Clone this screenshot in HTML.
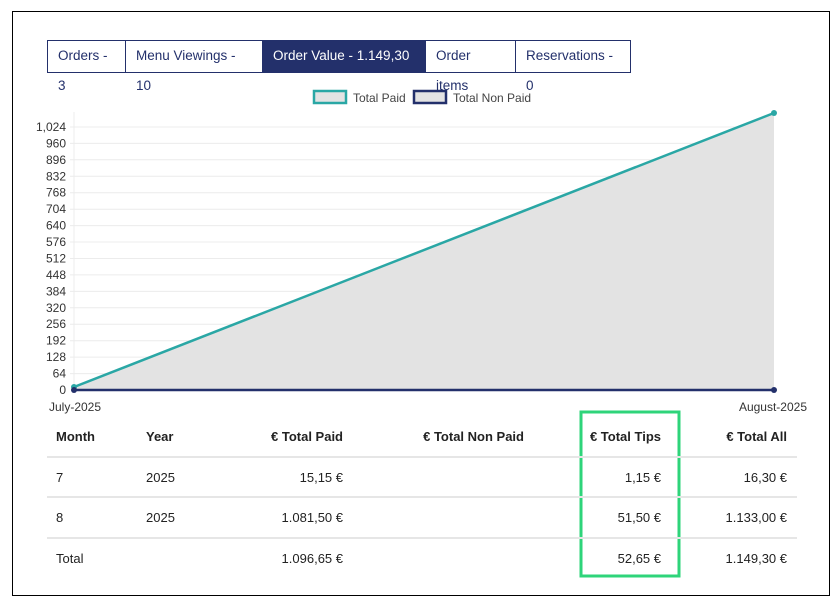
<!DOCTYPE html>
<html><head><meta charset="utf-8"><style>
body{margin:0;width:838px;height:603px;background:#fff;font-family:"Liberation Sans",sans-serif;position:relative;overflow:hidden}
.frame{position:absolute;left:12px;top:11px;width:816px;height:583px;border:1px solid #000}
.tabs{position:absolute;left:47px;top:40px;height:31px;display:flex;border:1px solid #23306b}
.tabs div{height:31px;line-height:30px;font-size:13.5px;color:#23306b;padding:0 10px;border-left:1px solid #23306b;box-sizing:border-box}
.tabs div:first-child{border-left:none}
.tabs .a{background:#23306b;color:#fff}
.t{position:absolute;font-size:13px;color:#222;white-space:nowrap}
.h{font-weight:bold}
.r{text-align:right}
.hl{position:absolute;left:47px;width:750px;height:2px;background:#e6e6e6}
</style></head><body>
<div class="frame"></div>
<div class="tabs"><div style="width:77px">Orders - 3</div><div style="width:137px">Menu Viewings - 10</div><div class="a" style="width:163px">Order Value - 1.149,30 €</div><div style="width:90px">Order items</div><div style="width:115px">Reservations - 0</div></div>
<svg width="838" height="603" style="position:absolute;left:0;top:0" font-family="Liberation Sans, sans-serif">
<rect x="314" y="91" width="32" height="12" fill="#e3e3e3" stroke="#2aa7a5" stroke-width="2.5"/>
<text x="353" y="102" font-size="12" fill="#444">Total Paid</text>
<rect x="414" y="91" width="32" height="12" fill="#e3e3e3" stroke="#23306b" stroke-width="2.5"/>
<text x="453" y="102" font-size="12" fill="#444">Total Non Paid</text>
<g stroke="#ececec" stroke-width="1">
<line x1="70" x2="774" y1="127" y2="127"/><line x1="70" x2="774" y1="143.4" y2="143.4"/><line x1="70" x2="774" y1="159.8" y2="159.8"/><line x1="70" x2="774" y1="176.3" y2="176.3"/><line x1="70" x2="774" y1="192.7" y2="192.7"/><line x1="70" x2="774" y1="209.2" y2="209.2"/><line x1="70" x2="774" y1="225.6" y2="225.6"/><line x1="70" x2="774" y1="242" y2="242"/><line x1="70" x2="774" y1="258.5" y2="258.5"/><line x1="70" x2="774" y1="274.9" y2="274.9"/><line x1="70" x2="774" y1="291.4" y2="291.4"/><line x1="70" x2="774" y1="307.8" y2="307.8"/><line x1="70" x2="774" y1="324.2" y2="324.2"/><line x1="70" x2="774" y1="340.7" y2="340.7"/><line x1="70" x2="774" y1="357.1" y2="357.1"/><line x1="70" x2="774" y1="373.6" y2="373.6"/>
<line x1="74" x2="74" y1="112" y2="390"/>
</g>
<polygon points="74,387 774,113 774,390 74,390" fill="#e3e3e3"/>
<line x1="74" y1="387" x2="774" y2="113" stroke="#2aa7a5" stroke-width="2.5"/>
<circle cx="74" cy="387" r="3" fill="#2aa7a5"/><circle cx="774" cy="113" r="3" fill="#2aa7a5"/>
<line x1="74" y1="390" x2="774" y2="390" stroke="#23306b" stroke-width="2.5"/>
<circle cx="74" cy="390" r="3" fill="#23306b"/><circle cx="774" cy="390" r="3" fill="#23306b"/>
<g font-size="12" fill="#333" text-anchor="end">
<text x="66" y="131">1,024</text><text x="66" y="147.4">960</text><text x="66" y="163.8">896</text><text x="66" y="180.3">832</text><text x="66" y="196.7">768</text><text x="66" y="213.2">704</text><text x="66" y="229.6">640</text><text x="66" y="246">576</text><text x="66" y="262.5">512</text><text x="66" y="278.9">448</text><text x="66" y="295.4">384</text><text x="66" y="311.8">320</text><text x="66" y="328.2">256</text><text x="66" y="344.7">192</text><text x="66" y="361.1">128</text><text x="66" y="377.6">64</text><text x="66" y="394">0</text>
</g>
<text x="49" y="411" font-size="12" fill="#333">July-2025</text>
<text x="807" y="411" font-size="12" fill="#333" text-anchor="end">August-2025</text>
<rect x="581" y="412" width="98" height="164" fill="none" stroke="#2ed47a" stroke-width="3"/>
</svg>
<div class="hl" style="top:456px"></div><div class="hl" style="top:496px"></div><div class="hl" style="top:537px"></div>
<div class="t h" style="left:56px;top:429px">Month</div>
<div class="t h" style="left:146px;top:429px">Year</div>
<div class="t h r" style="right:495px;top:429px">€ Total Paid</div>
<div class="t h r" style="right:314px;top:429px">€ Total Non Paid</div>
<div class="t h r" style="right:177px;top:429px">€ Total Tips</div>
<div class="t h r" style="right:51px;top:429px">€ Total All</div>
<div class="t" style="left:56px;top:470px">7</div><div class="t" style="left:146px;top:470px">2025</div>
<div class="t r" style="right:495px;top:470px">15,15 €</div><div class="t r" style="right:177px;top:470px">1,15 €</div><div class="t r" style="right:51px;top:470px">16,30 €</div>
<div class="t" style="left:56px;top:510px">8</div><div class="t" style="left:146px;top:510px">2025</div>
<div class="t r" style="right:495px;top:510px">1.081,50 €</div><div class="t r" style="right:177px;top:510px">51,50 €</div><div class="t r" style="right:51px;top:510px">1.133,00 €</div>
<div class="t" style="left:56px;top:551px">Total</div>
<div class="t r" style="right:495px;top:551px">1.096,65 €</div><div class="t r" style="right:177px;top:551px">52,65 €</div><div class="t r" style="right:51px;top:551px">1.149,30 €</div>
</body></html>
